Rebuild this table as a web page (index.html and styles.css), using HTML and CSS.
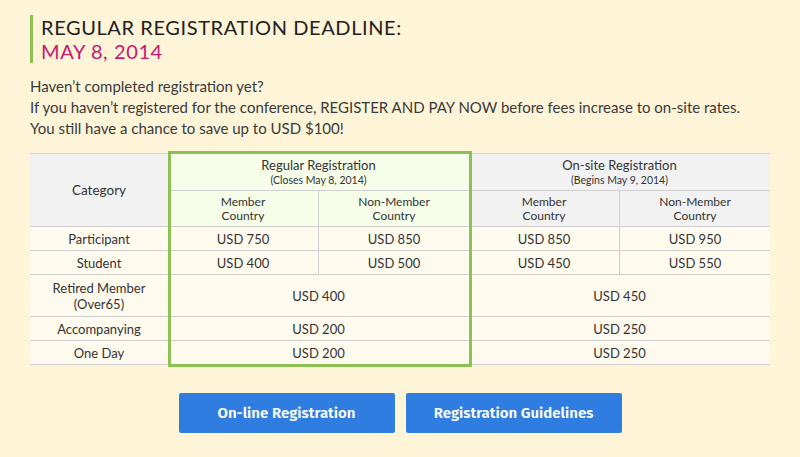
FILE: index.html
```html
<!DOCTYPE html>
<html>
<head>
<meta charset="utf-8">
<link rel="stylesheet" href="styles.css">
</head>
<body>
<div class="page">
  <h1 class="deadline">
    <span class="deadline-label">REGULAR REGISTRATION DEADLINE:</span>
    <span class="deadline-date">MAY 8, 2014</span>
  </h1>
  <p class="intro">Haven’t completed registration yet?<br>If you haven’t registered for the conference, REGISTER AND PAY NOW before fees increase to on-site rates.<br>You still have a chance to save up to USD $100!</p>
  <div class="fees">
    <table class="fee-table">
      <colgroup>
        <col class="col-cat">
        <col class="col-price"><col class="col-price"><col class="col-price"><col class="col-price">
      </colgroup>
      <thead>
        <tr class="head1">
          <th rowspan="2" class="cat-head">Category</th>
          <th colspan="2" class="reg">Regular Registration<small>(Closes May 8, 2014)</small></th>
          <th colspan="2">On-site Registration<small>(Begins May 9, 2014)</small></th>
        </tr>
        <tr class="head2">
          <th class="reg sep">Member<br>Country</th>
          <th class="reg">Non-Member<br>Country</th>
          <th class="sep">Member<br>Country</th>
          <th>Non-Member<br>Country</th>
        </tr>
      </thead>
      <tbody>
        <tr><td>Participant</td><td class="sep">USD 750</td><td>USD 850</td><td class="sep">USD 850</td><td>USD 950</td></tr>
        <tr><td>Student</td><td class="sep">USD 400</td><td>USD 500</td><td class="sep">USD 450</td><td>USD 550</td></tr>
        <tr class="tall"><td>Retired Member<br>(Over65)</td><td colspan="2">USD 400</td><td colspan="2">USD 450</td></tr>
        <tr><td>Accompanying</td><td colspan="2">USD 200</td><td colspan="2">USD 250</td></tr>
        <tr><td>One Day</td><td colspan="2">USD 200</td><td colspan="2">USD 250</td></tr>
      </tbody>
    </table>
    <div class="highlight"></div>
  </div>
  <div class="actions">
    <a class="btn" href="#">On-line Registration</a>
    <a class="btn" href="#">Registration Guidelines</a>
  </div>
</div>
</body>
</html>
```
FILE: styles.css
```css
html, body {
  margin: 0;
  padding: 0;
  background: #fef4d8;
}
body {
  font-family: "Lato", "Liberation Sans", sans-serif;
  color: #333;
}
.page {
  padding: 15px 30px 0 30px;
}
.deadline {
  margin: 0;
  border-left: 3px solid #8dc153;
  padding-left: 8px;
  font-weight: 400;
  font-size: 20px;
  letter-spacing: 0.6px;
  line-height: 24px;
  display: flex;
  flex-direction: column;
}
.deadline-label {
  color: #222;
}
.deadline-date {
  color: #c8176f;
}
.intro {
  margin: 13px 0 0 0;
  font-size: 15px;
  line-height: 21px;
  color: #3a3a3a;
}
.fees {
  position: relative;
  margin-top: 14px;
  width: 740px;
}
.fee-table {
  width: 740px;
  table-layout: fixed;
  border-collapse: collapse;
  font-size: 13px;
  color: #333;
  text-align: center;
}
.col-cat { width: 138px; }
.col-price { width: 150.5px; }
.fee-table th, .fee-table td {
  border-top: 1px solid #cfcfcf;
  border-bottom: 1px solid #cfcfcf;
  padding: 0;
  font-weight: 400;
  text-align: center;
}
.fee-table td {
  background: #fffaee;
  height: 23px;
}
.fee-table tr.tall td {
  height: 41px;
  line-height: 16px;
}
.fee-table th {
  background: #f2f2f2;
}
.fee-table th.reg {
  background: #f6feea;
}
.head1 th {
  height: 36px;
  line-height: 16px;
}
.head1 th small {
  display: block;
  font-size: 10.5px;
  line-height: 14px;
}
.head2 th {
  height: 35px;
  line-height: 14px;
  font-size: 12px;
}
.cat-head {
  font-size: 13.5px;
}
.fee-table .sep {
  border-right: 1px solid #cfcfcf;
}
.highlight {
  position: absolute;
  left: 138px;
  top: -2px;
  width: 298px;
  height: 210px;
  border: 3px solid #8dc153;
  pointer-events: none;
}
.actions {
  display: flex;
  justify-content: center;
  gap: 11px;
  margin: 28px -30px 0 -30px;
}
.btn {
  display: flex;
  align-items: center;
  justify-content: center;
  width: 216px;
  height: 40px;
  background: #2f7de1;
  color: #fff;
  font-family: "Fira Sans", "Open Sans", "Lato", sans-serif;
  font-weight: 600;
  font-size: 15px;
  text-decoration: none;
  border-radius: 2px;
}
```
